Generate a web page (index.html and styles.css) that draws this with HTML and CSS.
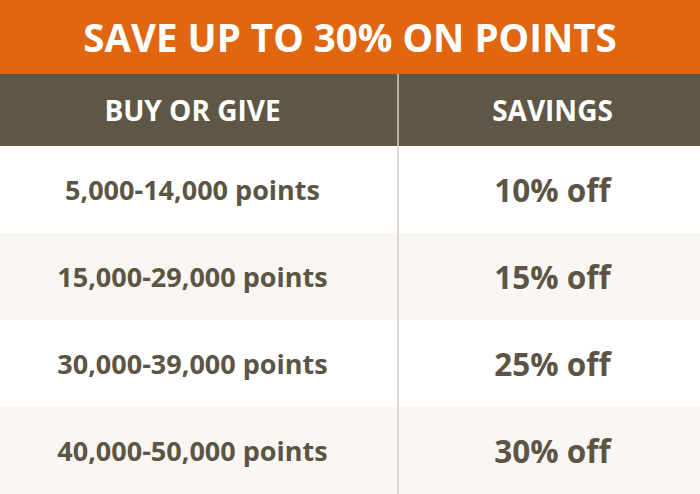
FILE: index.html
```html
<!DOCTYPE html>
<html>
<head>
<meta charset="utf-8">
<link rel="stylesheet" href="styles.css">
</head>
<body>
<div class="card">
  <div class="title">SAVE UP TO 30% ON POINTS</div>
  <div class="table">
    <div class="row head">
      <div class="cell left">BUY OR GIVE</div>
      <div class="cell right">SAVINGS</div>
    </div>
    <div class="row">
      <div class="cell left">5,000-14,000 points</div>
      <div class="cell right">10% off</div>
    </div>
    <div class="row alt">
      <div class="cell left">15,000-29,000 points</div>
      <div class="cell right">15% off</div>
    </div>
    <div class="row">
      <div class="cell left">30,000-39,000 points</div>
      <div class="cell right">25% off</div>
    </div>
    <div class="row alt">
      <div class="cell left">40,000-50,000 points</div>
      <div class="cell right">30% off</div>
    </div>
  </div>
</div>
</body>
</html>
```
FILE: styles.css
```css
html, body {
  margin: 0;
  padding: 0;
  background: #ffffff;
}
.card {
  width: 700px;
  height: 494px;
  font-family: "Open Sans", "Liberation Sans", sans-serif;
  font-weight: 700;
  color: #5c5545;
  display: flex;
  flex-direction: column;
}
.title {
  height: 74px;
  background: #e2650f;
  color: #ffffff;
  font-size: 38.5px;
  display: flex;
  align-items: center;
  justify-content: center;
}
.table {
  flex: 1;
  display: flex;
  flex-direction: column;
}
.row {
  display: grid;
  grid-template-columns: 399px 1fr;
  height: 87px;
}
.row.head {
  height: 72px;
  background: #5e5746;
  color: #ffffff;
}
.row.alt {
  background: #f9f6f3;
}
.cell {
  display: flex;
  align-items: center;
  justify-content: center;
}
.cell.left {
  border-right: 2px solid #dddad6;
  font-size: 27px;
  padding-right: 12px;
}
.cell.right {
  font-size: 31.5px;
  padding-left: 6px;
}
.head .cell.left {
  border-right-color: #b5b1aa;
}
.head .cell {
  font-size: 28px;
}
```
